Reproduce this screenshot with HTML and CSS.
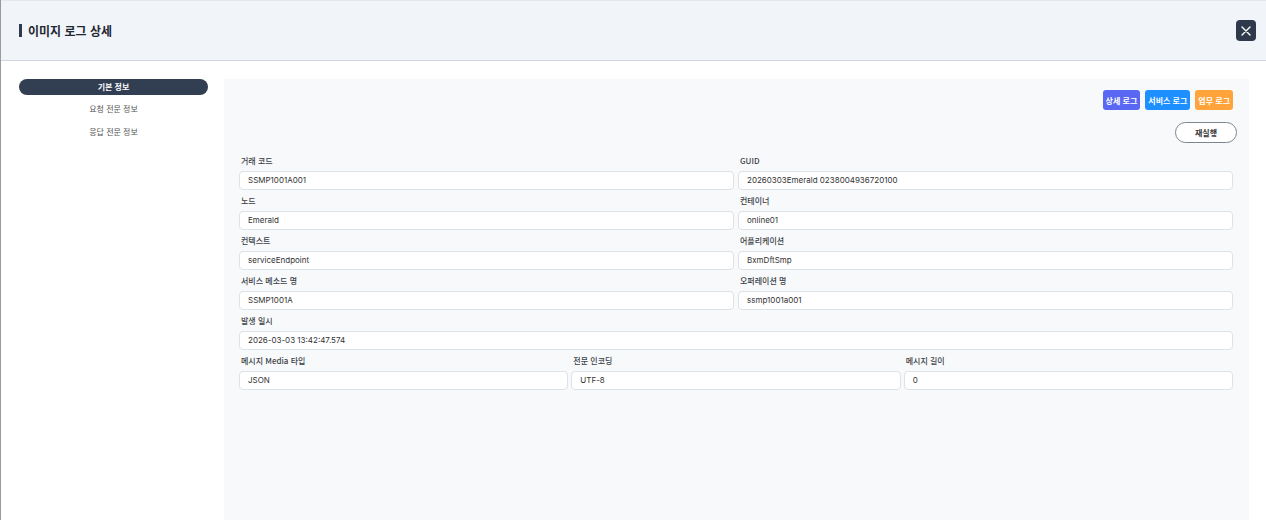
FILE: index.html
```html
<!DOCTYPE html>
<html lang="ko">
<head>
    <meta charset="UTF-8">
    <title>이미지 로그 상세</title>
    <link rel="stylesheet" href="styles.css">
</head>
<body>
    <div class="modal">
        <div class="modal-head">
            <h1 class="modal-title">이미지 로그 상세</h1>
            <button class="close-btn" aria-label="닫기">
                <svg width="10" height="10" viewBox="0 0 10 10"><path d="M1 1L9 9M9 1L1 9" stroke="#fff" stroke-width="1.4" stroke-linecap="round"/></svg>
            </button>
        </div>

        <div class="modal-body">
            <ul class="side-menu">
                <li class="active">기본 정보</li>
                <li>요청 전문 정보</li>
                <li>응답 전문 정보</li>
            </ul>

            <div class="panel">
                <div class="log-btns">
                    <button class="tag tag-detail">상세 로그</button>
                    <button class="tag tag-service">서비스 로그</button>
                    <button class="tag tag-work">업무 로그</button>
                </div>
                <div class="rerun-row">
                    <button class="rerun">재실행</button>
                </div>

                <div class="form-grid cols-2">
                    <div class="field">
                        <label>거래 코드</label>
                        <div class="input">SSMP1001A001</div>
                    </div>
                    <div class="field">
                        <label>GUID</label>
                        <div class="input">20260303Emerald 0238004936720100</div>
                    </div>
                    <div class="field">
                        <label>노드</label>
                        <div class="input">Emerald</div>
                    </div>
                    <div class="field">
                        <label>컨테이너</label>
                        <div class="input">online01</div>
                    </div>
                    <div class="field">
                        <label>컨텍스트</label>
                        <div class="input">serviceEndpoint</div>
                    </div>
                    <div class="field">
                        <label>어플리케이션</label>
                        <div class="input">BxmDftSmp</div>
                    </div>
                    <div class="field">
                        <label>서비스 메소드 명</label>
                        <div class="input">SSMP1001A</div>
                    </div>
                    <div class="field">
                        <label>오퍼레이션 명</label>
                        <div class="input">ssmp1001a001</div>
                    </div>
                    <div class="field full">
                        <label>발생 일시</label>
                        <div class="input">2026-03-03 13:42:47.574</div>
                    </div>
                </div>

                <div class="form-grid cols-3">
                    <div class="field">
                        <label>메시지 Media 타입</label>
                        <div class="input">JSON</div>
                    </div>
                    <div class="field">
                        <label>전문 인코딩</label>
                        <div class="input">UTF-8</div>
                    </div>
                    <div class="field">
                        <label>메시지 길이</label>
                        <div class="input">0</div>
                    </div>
                </div>
            </div>
        </div>
    </div>
</body>
</html>
```

FILE: styles.css
```css
body {
    margin: 0;
    padding: 0;
    background: #fff;
    font-family: Inter, "Noto Sans CJK KR", sans-serif;
    color: #333;
    overflow: hidden;
}

.modal {
    border-left: 1px solid #9a9a9a;
    height: 520px;
    display: flex;
    flex-direction: column;
}

.modal-head {
    flex-shrink: 0;
    height: 61px;
    box-sizing: border-box;
    background: #f1f4f9;
    border-top: 1px solid #e4e7ec;
    border-bottom: 1px solid #cfd5de;
    display: flex;
    align-items: center;
    justify-content: space-between;
    padding: 0 10px 0 18px;
}

.modal-title {
    margin: 0;
    font-family: "Noto Sans CJK KR", sans-serif;
    font-size: 12px;
    font-weight: 700;
    color: #1f2733;
    display: flex;
    align-items: center;
    gap: 6px;
}

.modal-title::before {
    content: "";
    width: 3px;
    height: 13px;
    background: #2f3a4c;
}

.close-btn {
    width: 20px;
    height: 21px;
    border: none;
    border-radius: 4px;
    background: #2e3a4b;
    display: flex;
    align-items: center;
    justify-content: center;
    padding: 0;
    cursor: pointer;
}

.modal-body {
    flex: 1;
    min-height: 0;
    display: flex;
    gap: 16px;
    padding: 18px 17px 0 18px;
}

.side-menu {
    align-self: flex-start;
    list-style: none;
    margin: 0;
    padding: 0;
    width: 189px;
    flex-shrink: 0;
    font-family: "Noto Sans CJK KR", sans-serif;
    font-size: 8px;
}

.side-menu li {
    height: 23px;
    line-height: 23px;
    text-align: center;
    color: #555;
}

.side-menu li.active {
    height: 16px;
    line-height: 16px;
    margin-bottom: 2px;
    border-radius: 8px;
    background: #323e52;
    color: #fff;
    font-weight: 700;
}

.panel {
    flex: 1;
    background: #f8f9fb;
    padding: 11px 16px 0 15px;
}

.log-btns {
    display: flex;
    justify-content: flex-end;
    gap: 5px;
}

.tag {
    border: none;
    height: 20px;
    padding: 0 3px;
    border-radius: 3px;
    color: #fff;
    font-family: "Noto Sans CJK KR", sans-serif;
    font-size: 8px;
    font-weight: 700;
}

.tag-detail { background: #5a67f2; }
.tag-service { background: #1e8fff; }
.tag-work { background: #ffa43b; }

.rerun-row {
    display: flex;
    justify-content: flex-end;
    margin: 12px -4px 0 0;
}

.rerun {
    width: 62px;
    height: 21px;
    border: 1px solid #7d8591;
    border-radius: 11px;
    background: #fff;
    color: #333;
    font-family: "Noto Sans CJK KR", sans-serif;
    font-size: 8px;
    font-weight: 700;
}

.form-grid {
    display: grid;
    column-gap: 4px;
    row-gap: 5px;
}

.cols-2 {
    grid-template-columns: 1fr 1fr;
    margin-top: 12px;
}

.cols-3 {
    grid-template-columns: 1fr 1fr 1fr;
    margin-top: 5px;
    column-gap: 3px;
}

.field.full {
    grid-column: 1 / -1;
}

.field label {
    display: block;
    height: 12px;
    line-height: 12px;
    margin: 0 0 4px 2px;
    font-family: "Noto Sans CJK KR", sans-serif;
    font-size: 8px;
    font-weight: 500;
    color: #3a3f47;
}

.input {
    height: 19px;
    line-height: 17px;
    box-sizing: border-box;
    border: 1px solid #dde1e8;
    border-radius: 4px;
    background: #fff;
    padding: 0 8px;
    font-size: 8px;
    color: #333;
}
```
